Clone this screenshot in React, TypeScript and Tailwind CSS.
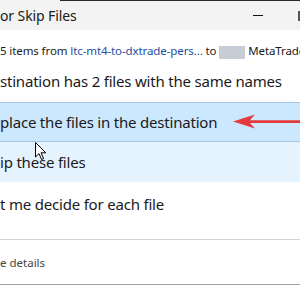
import React from "react";

function Cut({ hidden, children }: { hidden: string; children: React.ReactNode }) {
  // the first part of the line runs off the left edge of the picture
  return (
    <span className="flex items-center whitespace-nowrap">
      <span className="flex w-0 shrink-0 justify-end">
        <span className="shrink-0 whitespace-pre">{hidden}</span>
      </span>
      <span className="whitespace-pre">{children}</span>
    </span>
  );
}

function Arrow() {
  return (
    <svg width="67" height="16" viewBox="0 0 67 16" className="shrink-0">
      <path d="M0 7.5 L22 0.5 L17 6.2 L67 6.2 L67 9 L17 9 L22 14.5 Z" fill="#e5393d" />
    </svg>
  );
}

function Cursor() {
  return (
    <svg width="12" height="19" viewBox="0 0 12 19">
      <path
        d="M0.5 0.5 L0.5 15 L4 11.6 L6.6 17.5 L8.6 16.6 L6 10.8 L10.8 10.8 Z"
        fill="#fff"
        stroke="#000"
        strokeWidth="1"
        strokeLinejoin="round"
      />
    </svg>
  );
}

export default function App() {
  return (
    <div
      className="relative h-[287px] w-[300px] overflow-hidden bg-white text-[#1a1a1a]"
      style={{ fontFamily: "'Noto Sans', 'Open Sans', sans-serif" }}
    >
      <div className="flex h-[30px] flex-col bg-[#f3f3f3]">
        <div className="ml-[60px] h-px bg-[#2b2b2b]" />
        <div className="flex flex-1 items-center justify-between">
          <div className="text-[14px] tracking-[-0.1px]">
            <Cut hidden="Replace ">or Skip Files</Cut>
          </div>
          <div className="flex items-center">
            <div className="h-px w-[10px] bg-[#111]" />
            <div className="ml-[35px] h-[10px] w-[2px] bg-[#555]" />
          </div>
        </div>
      </div>

      <div className="h-[14px]" />
      <div className="flex h-[14px] items-center text-[11.5px] tracking-[-0.1px]">
        <Cut hidden="Copying ">
          5 items from <span className="text-[#1e4fa0]">ltc-mt4-to-dxtrade-pers...</span> to{" "}
          <span className="inline-block h-[13px] w-[26px] bg-[#c8ccd6] align-middle" /> MetaTrader
        </Cut>
      </div>

      <div className="flex h-[44px] items-center pt-[2px] text-[15px] tracking-[-0.2px]">
        <Cut hidden="The de">stination has 2 files with the same names</Cut>
      </div>

      <div className="flex h-[40px] items-center justify-between border-y border-[#a6c6e2] bg-[#cce8ff] text-[15px] tracking-[-0.2px]">
        <Cut hidden="Re">place the files in the destination</Cut>
        <Arrow />
      </div>

      <div className="relative flex h-[40px] items-center bg-[#e5f3ff] text-[15px] tracking-[-0.2px]">
        <Cut hidden="Sk">ip these files</Cut>
        <div className="absolute left-[35px] top-0">
          <Cursor />
        </div>
      </div>

      <div className="flex h-[44px] items-center text-[15px] tracking-[-0.2px]">
        <Cut hidden="Le">t me decide for each file</Cut>
      </div>

      <div className="mt-[13px] h-px bg-[#d4d4d4]" />

      <div className="flex h-[44px] items-center pt-[2px] text-[11.5px] text-[#444]">
        <Cut hidden="Mor">e details</Cut>
      </div>
      <div className="h-px bg-[#a0a0a0]" />
    </div>
  );
}
